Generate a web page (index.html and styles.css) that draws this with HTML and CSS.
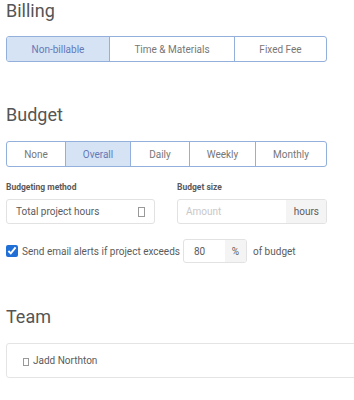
FILE: index.html
```html
<html>
    <head>
        <link rel="stylesheet" href="styles.css">
    </head>
    <body>
        <div class="page">
            <h2 class="title">Billing</h2>
            <div class="seg seg-billing">
                <div class="seg-btn active">Non-billable</div>
                <div class="seg-btn">Time &amp; Materials</div>
                <div class="seg-btn">Fixed Fee</div>
            </div>

            <h2 class="title title-budget">Budget</h2>
            <div class="seg seg-budget">
                <div class="seg-btn">None</div>
                <div class="seg-btn active">Overall</div>
                <div class="seg-btn">Daily</div>
                <div class="seg-btn">Weekly</div>
                <div class="seg-btn">Monthly</div>
            </div>

            <div class="fields">
                <div class="field">
                    <div class="label">Budgeting method</div>
                    <div class="box select">
                        <span>Total project hours</span>
                        <span class="tofu"></span>
                    </div>
                </div>
                <div class="field">
                    <div class="label">Budget size</div>
                    <div class="box group">
                        <span class="placeholder">Amount</span>
                        <span class="addon">hours</span>
                    </div>
                </div>
            </div>

            <div class="alert-row">
                <input type="checkbox" class="check" checked>
                <span>Send email alerts if project exceeds</span>
                <div class="box pct">
                    <span class="pct-val">80</span>
                    <span class="addon addon-pct">%</span>
                </div>
                <span>of budget</span>
            </div>

            <h2 class="title title-team">Team</h2>
            <div class="team">
                <span class="tofu tofu-sm"></span>
                <span>Jadd Northton</span>
            </div>
        </div>
    </body>
</html>
```

FILE: styles.css
```css
body {
    margin: 0;
    font-family: Roboto, "Liberation Sans", sans-serif;
    color: #5c5c5c;
    background: #fff;
}
.page {
    padding-left: 6px;
}
.title {
    margin: 0;
    font-size: 18px;
    font-weight: normal;
    line-height: 22px;
    color: #555;
}
.title-budget {
    margin-top: 42px;
}
.title-team {
    margin-top: 43px;
}
.seg {
    display: flex;
    width: 321px;
    height: 26px;
    box-sizing: border-box;
    border: 1px solid #93b0dc;
    border-radius: 3px;
    overflow: hidden;
}
.seg-billing {
    margin-top: 14px;
}
.seg-budget {
    margin-top: 15px;
}
.seg-btn {
    display: flex;
    align-items: center;
    justify-content: center;
    font-size: 10px;
    color: #777;
    border-left: 1px solid #93b0dc;
}
.seg-btn:first-child {
    border-left: none;
}
.seg-btn.active {
    background-color: #d5e3f5;
    color: #6479b8;
}
.seg-billing .seg-btn:nth-child(1) { width: 102px; }
.seg-billing .seg-btn:nth-child(2) { width: 124px; }
.seg-billing .seg-btn:nth-child(3) { flex: 1; }
.seg-budget .seg-btn:nth-child(1) { width: 58px; }
.seg-budget .seg-btn:nth-child(2) { width: 64px; }
.seg-budget .seg-btn:nth-child(3) { width: 58px; }
.seg-budget .seg-btn:nth-child(4) { width: 65px; }
.seg-budget .seg-btn:nth-child(5) { flex: 1; }

.fields {
    display: flex;
    gap: 22px;
    margin-top: 14px;
}
.field {
    width: 149px;
}
.field + .field {
    width: 150px;
}
.label {
    font-size: 8.5px;
    font-weight: bold;
    color: #5a5a5a;
    line-height: 12px;
    margin-bottom: 6px;
}
.box {
    display: flex;
    align-items: center;
    height: 25px;
    box-sizing: border-box;
    border: 1px solid #e2e2e2;
    border-radius: 3px;
    font-size: 10px;
}
.select {
    justify-content: space-between;
    padding: 0 9px;
}
.tofu {
    width: 5px;
    height: 8px;
    border: 1px solid #999;
}
.group {
    overflow: hidden;
}
.placeholder {
    flex: 1;
    padding-left: 8px;
    color: #c8c8c8;
}
.addon {
    display: flex;
    align-items: center;
    height: 100%;
    padding: 0 7px 0 8px;
    background-color: #f4f4f4;
    color: #5c5c5c;
}
.alert-row {
    display: flex;
    align-items: center;
    margin-top: 15px;
    font-size: 10px;
}
.check {
    width: 12px;
    height: 12px;
    margin: 0 4px 0 0;
    accent-color: #1f6fd6;
}
.pct {
    width: 64px;
    height: 24px;
    margin: 0 6px 0 3px;
    overflow: hidden;
}
.pct-val {
    flex: 1;
    padding-left: 10px;
}
.addon-pct {
    padding: 0 7px;
}
.team {
    display: flex;
    align-items: center;
    gap: 4px;
    margin-top: 15px;
    height: 35px;
    width: 360px;
    box-sizing: border-box;
    border: 1px solid #e4e4e4;
    border-radius: 3px;
    padding-left: 16px;
    font-size: 10px;
}
.tofu-sm {
    width: 4px;
    height: 6px;
    margin-top: 3px;
}
```
